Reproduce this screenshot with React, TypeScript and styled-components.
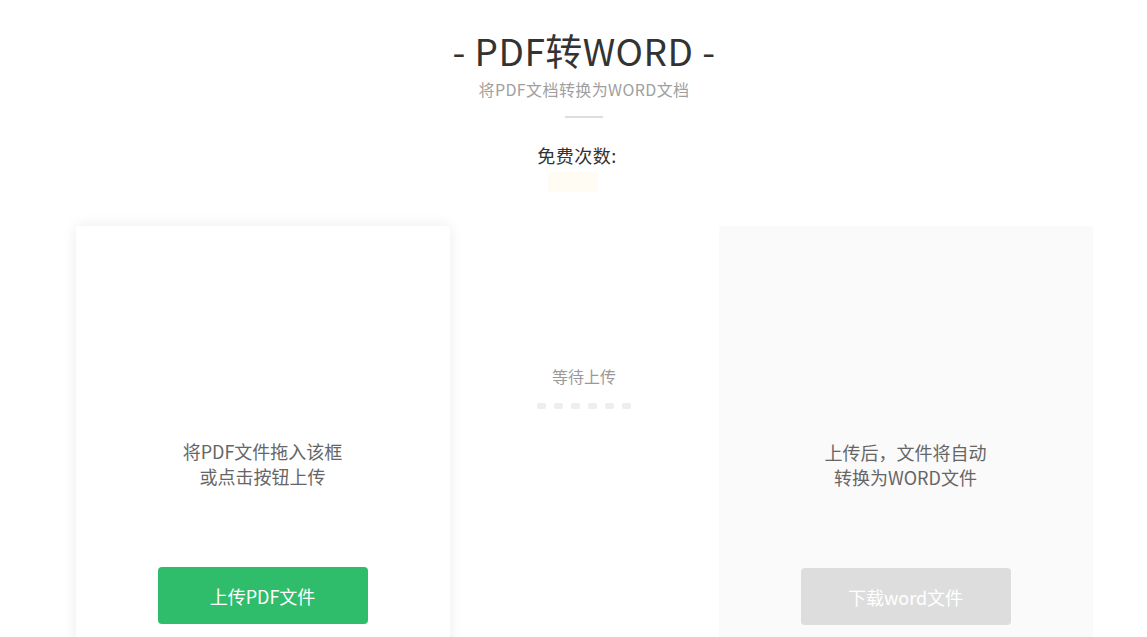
import styled, { createGlobalStyle } from 'styled-components';

const GlobalStyle = createGlobalStyle`
  html, body {
    margin: 0;
    padding: 0;
    background: #ffffff;
    overflow: hidden;
  }
  body {
    font-family: "Noto Sans CJK SC", "Noto Sans", sans-serif;
  }
`;

const Page = styled.div`
  width: 100%;
  height: 637px;
  overflow: hidden;
  padding-left: 21px;
  box-sizing: border-box;
`;

const Header = styled.div`
  display: flex;
  flex-direction: column;
  align-items: center;
  padding-top: 25px;
`;

const Title = styled.h1`
  margin: 0;
  font-size: 37px;
  font-weight: 400;
  line-height: 50px;
  color: #333333;
  letter-spacing: 0.5px;
`;

const SubTitle = styled.p`
  margin: 3px 0 0;
  font-size: 16px;
  line-height: 22px;
  letter-spacing: 0.4px;
  color: #a0a0a0;
`;

const Divider = styled.div`
  width: 38px;
  height: 2px;
  background: #dddddd;
  margin-top: 16px;
`;

const FreeCount = styled.p`
  margin: 24px 14px 0 0;
  font-size: 18px;
  line-height: 26px;
  letter-spacing: 0.5px;
  color: #333333;
`;

const CountBadge = styled.div`
  width: 50px;
  height: 20px;
  margin: 4px 22px 0 0;
  background: #fffdf3;
`;

const Workspace = styled.div`
  display: flex;
  justify-content: center;
  margin-top: 34px;
`;

const Card = styled.div<{ $muted?: boolean }>`
  width: 374px;
  height: 440px;
  box-sizing: border-box;
  display: flex;
  flex-direction: column;
  align-items: center;
  background: ${p => (p.$muted ? '#fafafa' : '#ffffff')};
  box-shadow: ${p => (p.$muted ? 'none' : '0 0 14px rgba(0, 0, 0, 0.08)')};
  padding-top: ${p => (p.$muted ? '214px' : '213px')};
`;

const CardText = styled.p`
  margin: 0;
  font-size: 18px;
  line-height: 25px;
  color: #666666;
  text-align: center;
`;

const ActionButton = styled.button<{ $disabled?: boolean }>`
  margin-top: 78px;
  width: 210px;
  height: 57px;
  border: none;
  border-radius: 4px;
  font-family: "Noto Sans CJK SC", "Noto Sans", sans-serif;
  font-size: 18px;
  color: #ffffff;
  background: ${p => (p.$disabled ? '#dddddd' : '#2fbd6c')};
  cursor: ${p => (p.$disabled ? 'default' : 'pointer')};
`;

const Middle = styled.div`
  width: 269px;
  display: flex;
  flex-direction: column;
  align-items: center;
  padding-top: 139px;
`;

const WaitText = styled.span`
  font-size: 16px;
  line-height: 22px;
  color: #999999;
`;

const Dots = styled.div`
  display: flex;
  gap: 8px;
  margin-top: 16px;
`;

const Dot = styled.span`
  width: 9px;
  height: 6px;
  border-radius: 2px;
  background: #eeeeee;
`;

export default function App() {
  return (
    <>
      <GlobalStyle />
      <Page>
        <Header>
          <Title>- PDF转WORD -</Title>
          <SubTitle>将PDF文档转换为WORD文档</SubTitle>
          <Divider />
          <FreeCount>免费次数:</FreeCount>
          <CountBadge />
        </Header>
        <Workspace>
          <Card>
            <CardText>
              将PDF文件拖入该框
              <br />
              或点击按钮上传
            </CardText>
            <ActionButton>上传PDF文件</ActionButton>
          </Card>
          <Middle>
            <WaitText>等待上传</WaitText>
            <Dots>
              {Array.from({ length: 6 }).map((_, i) => (
                <Dot key={i} />
              ))}
            </Dots>
          </Middle>
          <Card $muted>
            <CardText>
              上传后，文件将自动
              <br />
              转换为WORD文件
            </CardText>
            <ActionButton $disabled>下载word文件</ActionButton>
          </Card>
        </Workspace>
      </Page>
    </>
  );
}
